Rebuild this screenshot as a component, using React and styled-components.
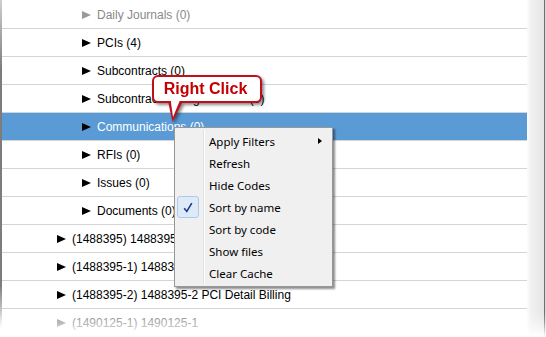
import React from "react"
import styled, { createGlobalStyle } from "styled-components"

const GlobalStyle = createGlobalStyle`
  html, body { margin: 0; padding: 0; background: #fff; }
  body { overflow: hidden; }
`

const Frame = styled.div`
  position: relative;
  width: 546px;
  height: 337px;
  display: flex;
  overflow: hidden;
  background: #fff;
  font-family: "Liberation Sans", Arial, sans-serif;
`

const LeftEdge = styled.div`
  width: 2px;
  flex: none;
  background: linear-gradient(to bottom, #cfcfcf 0, #7c7c7c 70px, #7c7c7c 285px, #fff 330px);
`

const Tree = styled.div`
  flex: 1;
  padding-top: 1px;
`

const Row = styled.div`
  height: 27px;
  border-bottom: 1px solid #d4d4d4;
  display: flex;
  align-items: center;
  padding-left: ${p => (p.level === 1 ? 55 : 80)}px;
  background: ${p => (p.selected ? "#5a9bd6" : "transparent")};
  color: ${p => (p.selected ? "#fff" : p.faded ? "#8a8a8a" : "#000")};
  font-size: 12px;
  white-space: nowrap;
`

const Expander = styled.span`
  width: 0;
  height: 0;
  border-top: 4.5px solid transparent;
  border-bottom: 4.5px solid transparent;
  border-left: 9px solid ${p => (p.faded ? "#9a9a9a" : "#000")};
  margin-right: 6px;
`

const RightShadow = styled.div`
  width: 19px;
  flex: none;
  background: linear-gradient(to right, #fcfcfc 0, #f1f1f1 4px, #e6e6e6 17px, #6f6f6f 17px, #6f6f6f 18px, #dadada 18px);
`

const BottomFade = styled.div`
  position: absolute;
  left: 0;
  right: 0;
  bottom: 0;
  height: 24px;
  background: linear-gradient(to bottom, rgba(255, 255, 255, 0), rgba(255, 255, 255, 0.3) 40%, #fff 100%);
  pointer-events: none;
`

const Callout = styled.div`
  position: absolute;
  left: 152px;
  top: 75px;
  width: 110px;
  height: 28px;
  box-sizing: border-box;
  border: 2px solid #c0111a;
  border-radius: 6px;
  background: #fff;
  color: #c40000;
  font-family: "Liberation Sans", Arial, sans-serif;
  font-weight: bold;
  font-size: 16px;
  display: flex;
  align-items: center;
  justify-content: center;
  padding-right: 3px;
  filter: drop-shadow(2px 2px 1.5px rgba(0, 0, 0, 0.45));

  &::before {
    content: "";
    position: absolute;
    left: 14px;
    top: 24px;
    width: 15px;
    height: 21px;
    background: #c0111a;
    clip-path: polygon(0 0, 100% 0, 30% 100%);
  }
  &::after {
    content: "";
    position: absolute;
    left: 16.5px;
    top: 22px;
    width: 10px;
    height: 18px;
    background: #fff;
    clip-path: polygon(0 0, 100% 0, 25% 100%);
  }
`

const Menu = styled.div`
  position: absolute;
  left: 174px;
  top: 127px;
  width: 159px;
  box-sizing: border-box;
  padding: 2px;
  background: #f0f0f0;
  border: 1px solid #979797;
  box-shadow: 2px 2px 2px rgba(0, 0, 0, 0.45);
  font-family: "Noto Sans", "Open Sans", sans-serif;
  font-size: 11.5px;
  color: #000;
`

const Item = styled.div`
  display: grid;
  grid-template-columns: 27px 1fr 14px;
  height: 22px;
  align-items: center;
`

const Gutter = styled.div`
  height: 22px;
  border-right: 1px solid #e0e0e0;
  box-shadow: 1px 0 0 #fff;
  display: flex;
  align-items: center;
`

const CheckBox = styled.div`
  width: 22px;
  height: 22px;
  box-sizing: border-box;
  border: 1px solid #a9c9ee;
  border-radius: 3px;
  background: #dfeaf8;
  display: flex;
  align-items: center;
  justify-content: center;
`

const Label = styled.span`
  padding-left: 5px;
  white-space: nowrap;
`

const SubArrow = styled.span`
  width: 0;
  height: 0;
  border-top: 3.5px solid transparent;
  border-bottom: 3.5px solid transparent;
  border-left: 4px solid #000;
  margin-left: 2px;
`

const rows = [
  { level: 2, text: "Daily Journals (0)", faded: true },
  { level: 2, text: "PCIs (4)" },
  { level: 2, text: "Subcontracts (0)" },
  { level: 2, text: "Subcontract Change Orders (0)" },
  { level: 2, text: "Communications (0)", selected: true },
  { level: 2, text: "RFIs (0)" },
  { level: 2, text: "Issues (0)" },
  { level: 2, text: "Documents (0)" },
  { level: 1, text: "(1488395) 1488395 PCI Detail" },
  { level: 1, text: "(1488395-1) 1488395-1" },
  { level: 1, text: "(1488395-2) 1488395-2 PCI Detail Billing" },
  { level: 1, text: "(1490125-1) 1490125-1", faded: true },
]

const menuItems = [
  { label: "Apply Filters", sub: true },
  { label: "Refresh" },
  { label: "Hide Codes" },
  { label: "Sort by name", checked: true },
  { label: "Sort by code" },
  { label: "Show files" },
  { label: "Clear Cache" },
]

const Check = () => (
  <svg width="10" height="11" viewBox="0 0 10 11">
    <path d="M1.2 6.2 L3.8 9.4 L8.8 1.2" fill="none" stroke="#1c3a8c" strokeWidth="1.6" />
  </svg>
)

export default function App() {
  return (
    <>
      <GlobalStyle />
      <Frame>
        <LeftEdge />
        <Tree>
          {rows.map((r, i) => (
            <Row key={i} level={r.level} selected={r.selected} faded={r.faded}>
              <Expander faded={r.faded} />
              {r.text}
            </Row>
          ))}
        </Tree>
        <RightShadow />
        <BottomFade />
        <Callout>Right Click</Callout>
        <Menu>
          {menuItems.map(m => (
            <Item key={m.label}>
              <Gutter>
                {m.checked && (
                  <CheckBox>
                    <Check />
                  </CheckBox>
                )}
              </Gutter>
              <Label>{m.label}</Label>
              {m.sub ? <SubArrow /> : <span />}
            </Item>
          ))}
        </Menu>
      </Frame>
    </>
  )
}
